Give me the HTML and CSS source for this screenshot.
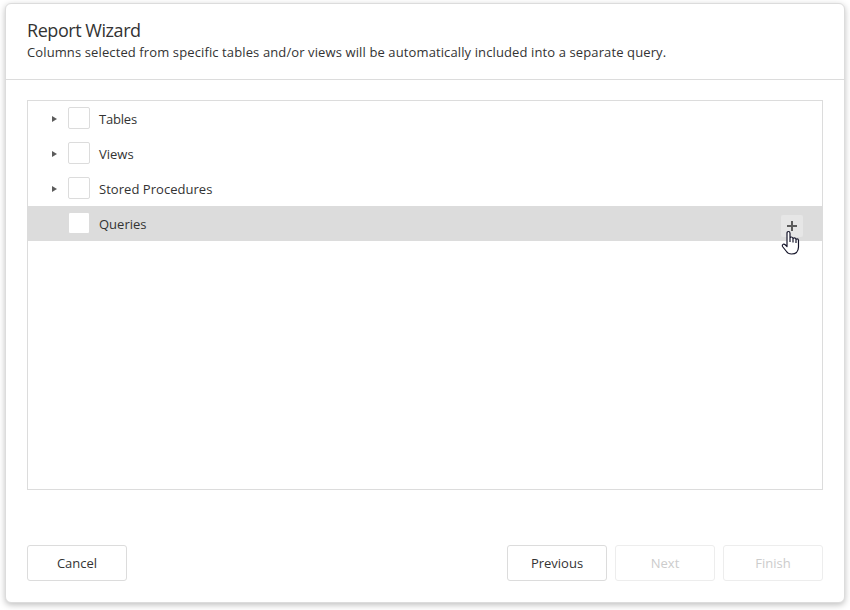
FILE: index.html
```html
<!DOCTYPE html>
<html lang="en">
<head>
<meta charset="utf-8">
<title>Report Wizard</title>
<link rel="stylesheet" href="styles.css">
</head>
<body>
<main class="wizard">
  <header class="header">
    <h1 class="title">Report Wizard</h1>
    <p class="description">Columns selected from specific tables and/or views will be automatically included into a separate query.</p>
  </header>
  <section class="content">
    <ul class="tree">
      <li class="row"><span class="arrow"></span><span class="checkbox"></span><span class="label tables">Tables</span></li>
      <li class="row"><span class="arrow"></span><span class="checkbox"></span><span class="label views">Views</span></li>
      <li class="row"><span class="arrow"></span><span class="checkbox"></span><span class="label procedures">Stored Procedures</span></li>
      <li class="row selected"><span class="arrow hidden"></span><span class="checkbox"></span><span class="label queries">Queries</span>
        <span class="add">
          <svg class="plus" width="22" height="22" viewBox="0 0 22 22"><path d="M6 11H16M11 6V16" stroke="#5c5c5c" stroke-width="2"/></svg>
          <svg class="cursor" width="20" height="26" viewBox="0 0 20 26"><path d="M6 15V3.2Q6 1.5 7.5 1.5T9 3.2V8.5Q9 7 10.5 7T12 9Q12 7.8 13.5 7.8T15 9.8Q15 8.8 16.2 8.8T17.5 10.5V17Q17.5 20 15.5 22.5Q14 24 10.5 24Q7 24 5.5 21.5L1.5 16.5Q0.8 14.8 2.2 14.2Q3.3 13.8 4.5 15L6 16.5ZM9 8V12M12 9V12.5M15 10V13" fill="#fff" stroke="#15152a" stroke-width="1.2" stroke-linejoin="round"/></svg>
        </span>
      </li>
    </ul>
  </section>
  <footer class="footer">
    <button class="button cancel">Cancel</button>
    <button class="button previous">Previous</button>
    <button class="button" disabled>Next</button>
    <button class="button" disabled>Finish</button>
  </footer>
</main>
</body>
</html>
```
FILE: styles.css
```css
* { box-sizing: border-box; }
body {
  margin: 0;
  padding: 3px 5px 7px;
  height: 610px;
  overflow: hidden;
  background: #fff;
  color: #333;
  font: 14px/19px "Open Sans", "Noto Sans", sans-serif;
}
.wizard {
  display: flex;
  flex-direction: column;
  width: 840px;
  height: 600px;
  border: 1px solid #dcdcdc;
  border-radius: 6px;
  background: #fff;
  box-shadow: 0 2px 6px rgba(0, 0, 0, .25);
}
.header {
  height: 76px;
  padding: 14px 21px 0;
  border-bottom: 1px solid #dcdcdc;
}
.title { margin: 0; font-size: 18px; font-weight: 400; line-height: 25px; letter-spacing: -.45px; }
.description { margin: 0; white-space: nowrap; font-size: 13px; line-height: 19px; letter-spacing: .115px; }
.content { padding: 20px 21px 0; }
.tree {
  height: 390px;
  margin: 0;
  padding: 0;
  border: 1px solid #dcdcdc;
  list-style: none;
}
.row { display: flex; align-items: center; height: 35px; padding: 0 19px 0 24px; font-size: 13px; }
.selected { background: #dcdcdc; }
.label { padding-top: 2px; }
.tables { letter-spacing: -.2px; }
.procedures { letter-spacing: .04px; }
.arrow {
  width: 5px;
  margin-right: 11px;
  border: solid transparent;
  border-width: 3px 0 3px 5px;
  border-left-color: #5c5c5c;
}
.hidden { visibility: hidden; }
.checkbox {
  width: 22px;
  height: 22px;
  margin: -1px 9px 0 0;
  border: 1px solid #dcdcdc;
  border-radius: 2px;
  background: #fff;
}
.add {
  position: relative;
  width: 22px;
  height: 22px;
  margin: 5px 0 0 auto;
  border-radius: 2px;
  background: #e6e6e6;
}
.plus { display: block; }
.cursor { position: absolute; left: 0; top: 15px; }
.footer { display: flex; gap: 8px; margin-top: 55px; padding: 0 21px; }
.button {
  width: 100px;
  height: 36px;
  padding: 0;
  border: 1px solid #dcdcdc;
  border-radius: 3px;
  background: #fff;
  color: #333;
  font: 13px/19px "Open Sans", "Noto Sans", sans-serif;
}
.cancel { margin-right: auto; }
.button:disabled { border-color: #ededed; color: #ccc; }
```
